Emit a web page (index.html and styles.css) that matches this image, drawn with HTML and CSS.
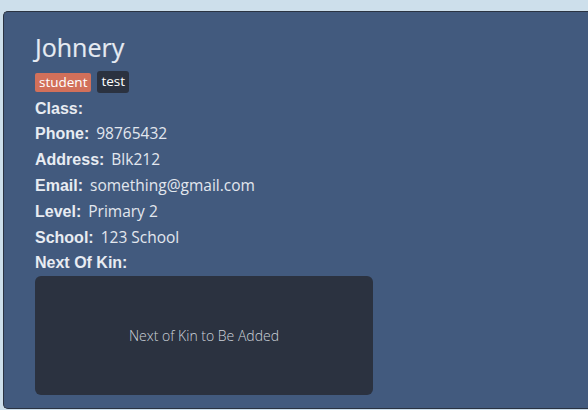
FILE: index.html
```html
<!DOCTYPE html>
<html>
<head>
<meta charset="utf-8">
<link rel="stylesheet" href="styles.css">
</head>
<body>
<div class="card">
  <h1 class="name">Johnery</h1>
  <div class="tags">
    <span class="tag tag-student">student</span>
    <span class="tag tag-test">test</span>
  </div>
  <div class="row row-first"><span class="label">Class:</span></div>
  <div class="row"><span class="label">Phone:</span><span class="value">98765432</span></div>
  <div class="row"><span class="label">Address:</span><span class="value">Blk212</span></div>
  <div class="row"><span class="label">Email:</span><span class="value">something@gmail.com</span></div>
  <div class="row"><span class="label">Level:</span><span class="value">Primary 2</span></div>
  <div class="row"><span class="label">School:</span><span class="value">123 School</span></div>
  <div class="row"><span class="label">Next Of Kin:</span></div>
  <div class="kin">Next of Kin to Be Added</div>
</div>
</body>
</html>
```
FILE: styles.css
```css
html, body {
  margin: 0;
  padding: 0;
  background: #cddfeb;
  overflow: hidden;
  height: 410px;
}
body {
  padding: 11px 0 0 3px;
  box-sizing: border-box;
}
.card {
  width: 585px;
  height: 398px;
  box-sizing: border-box;
  background: #425a7e;
  border: 1px solid #2a3342;
  border-right: none;
  border-radius: 5px 0 0 5px;
  padding: 20px 0 0 31px;
  color: #e8ecf2;
}
.name {
  margin: 0;
  font-family: "Open Sans", sans-serif;
  font-weight: 400;
  font-size: 25px;
  line-height: 30px;
  color: #e6ebf2;
  -webkit-text-stroke: 0.2px #e6ebf2;
}
.tags {
  display: flex;
  gap: 6px;
  margin-top: 9px;
  margin-bottom: 3px;
  align-items: center;
}
.tag {
  font-family: "Open Sans", sans-serif;
  font-size: 13.5px;
  line-height: 19px;
  padding: 0 4px;
  border-radius: 2px;
  color: #fff;
}
.tag-student { background: #d2705a; }
.tag-test { background: #2b3240; padding: 1px 4px 2px; border-radius: 3px; }
.row {
  display: flex;
  align-items: baseline;
  gap: 7px;
  height: 26px;
  line-height: 26px;
}
.row-first {
  height: 24px;
}
.label {
  font-family: "Liberation Sans", Arial, sans-serif;
  font-weight: 700;
  font-size: 16px;
  color: #e8ecf2;
}
.value {
  font-family: "Open Sans", sans-serif;
  font-size: 15.5px;
  color: #e2e7ee;
}
.kin {
  margin-top: 0;
  width: 338px;
  height: 119px;
  background: #2b3240;
  border-radius: 6px;
  display: flex;
  align-items: center;
  justify-content: center;
  font-family: "Open Sans", sans-serif;
  font-weight: 300;
  font-size: 14px;
  color: #cdd2da;
}
```
